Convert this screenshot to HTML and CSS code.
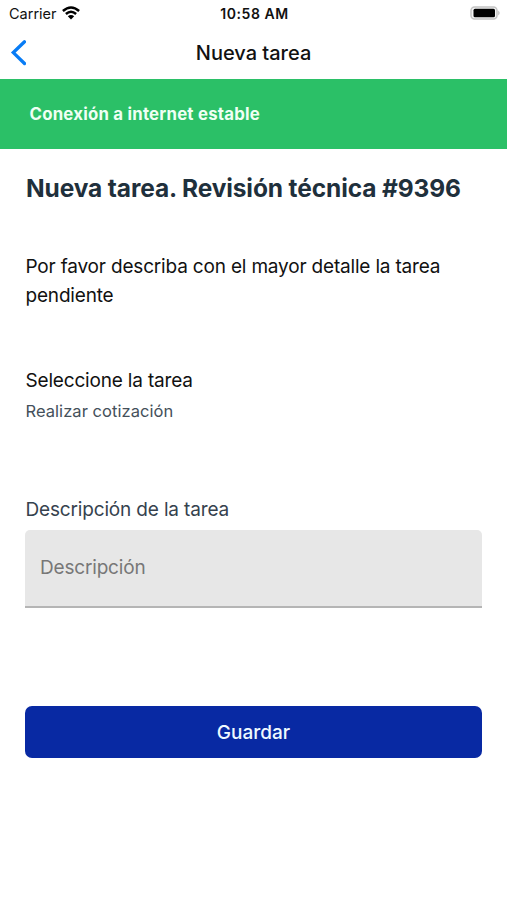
FILE: index.html
```html
<!DOCTYPE html>
<html lang="es">
<head>
<meta charset="utf-8">
<title>Nueva tarea</title>
<link rel="stylesheet" href="styles.css">
</head>
<body>
<div class="status">
  <div class="carrier"><span class="carrier-name">Carrier</span>
    <svg class="wifi" viewBox="0 0 18 14" width="18" height="14"><path d="M.9 5Q9-2 17.100 5M3.900 8Q9 3.500 14.100 8" fill="none" stroke="#000" stroke-width="2.500"/><path d="M5.800 10.200Q9 7.700 12.200 10.200L9 13.500Z"/></svg>
  </div>
  <span class="time">10:58 AM</span>
  <svg class="battery" viewBox="0 0 30 14" width="30" height="14"><rect x="1" y="1" width="26" height="12" rx="3.500" fill="#f4f4f4" stroke="#c4c4c4" stroke-width="1.500"/><rect x="3.500" y="2.700" width="21.500" height="8.600" rx="1.500"/><path d="M28.300 4.500Q30.800 7 28.300 9.500Z" fill="#b5b5b5"/></svg>
</div>
<header class="nav">
  <svg class="back" viewBox="0 0 16 26" width="16" height="26"><path d="M14.500 1.800L3.300 12.600L14.500 23.500" fill="none" stroke="#087cf5" stroke-width="3.300" stroke-linecap="round"/></svg>
  <h1 class="nav-title"><span>Nueva tarea</span></h1>
</header>
<div class="banner"><span>Conexión a internet estable</span></div>
<main class="content">
  <h2 class="heading"><span>Nueva tarea. Revisión técnica #9396</span></h2>
  <p class="intro">Por favor describa con el mayor detalle la tarea<br>pendiente</p>
  <p class="label"><span>Seleccione la tarea</span></p>
  <p class="value"><span>Realizar cotización</span></p>
  <p class="desc-label"><span>Descripción de la tarea</span></p>
  <div class="field"><span>Descripción</span></div>
  <button class="save"><span>Guardar</span></button>
</main>
</body>
</html>
```
FILE: styles.css
```css
* { box-sizing: border-box; }
body { margin: 0; height: 900px; background: #fff; color: #111; font-family: Inter, sans-serif; overflow: hidden; }
h1, h2, p { margin: 0; font-weight: 400; }
svg { display: block; }
.status { height: 26px; display: grid; grid-template-columns: 1fr auto 1fr; align-items: center; padding: 1px 7px 0 9px; }
.carrier { display: flex; align-items: center; gap: 5px; font-size: 14.500px; }
.wifi { margin-top: -2px; }
.time { font-size: 14px; font-weight: 600; letter-spacing: .55px; }
.battery { justify-self: end; margin-top: -1px; }
.nav { height: 53px; display: grid; grid-template-columns: 60px 1fr 60px; align-items: center; }
.back { margin-left: 10px; }
.nav-title { text-align: center; font-size: 20px; font-weight: 500; }
.banner { height: 70px; background: #2bc067; color: #effff4; font-size: 16.800px; font-weight: 700; letter-spacing: .22px; line-height: 70px; padding-left: 29.500px; }
.content { padding: 24px 25px 0; }
.heading { font-size: 24.500px; line-height: 30px; font-weight: 700; letter-spacing: -.12px; color: #1f303c; white-space: nowrap; padding-left: 1px; }
.intro { margin-top: 49px; font-size: 19px; line-height: 29px; letter-spacing: -.18px; white-space: nowrap; }
.label { margin-top: 56px; font-size: 19px; line-height: 30px; letter-spacing: -.18px; }
.value { font-size: 16.500px; line-height: 30px; letter-spacing: .05px; color: #44505a; }
.desc-label { margin-top: 69px; font-size: 19px; line-height: 30px; letter-spacing: -.16px; color: #36424e; }
.field { margin-top: 5px; height: 78px; background: #e7e7e7; border-bottom: 2px solid #b5b5b5; border-radius: 5px 5px 0 0; padding-left: 15px; font-size: 19px; line-height: 76px; letter-spacing: -.18px; color: #777; }
.save { display: block; width: 100%; height: 52px; margin-top: 98px; border: 0; border-radius: 7px; background: #0829a3; color: #effaff; font: 500 19px Inter, sans-serif; }
.intro, .label, .value, .desc-label { padding-left: .5px; }
```
